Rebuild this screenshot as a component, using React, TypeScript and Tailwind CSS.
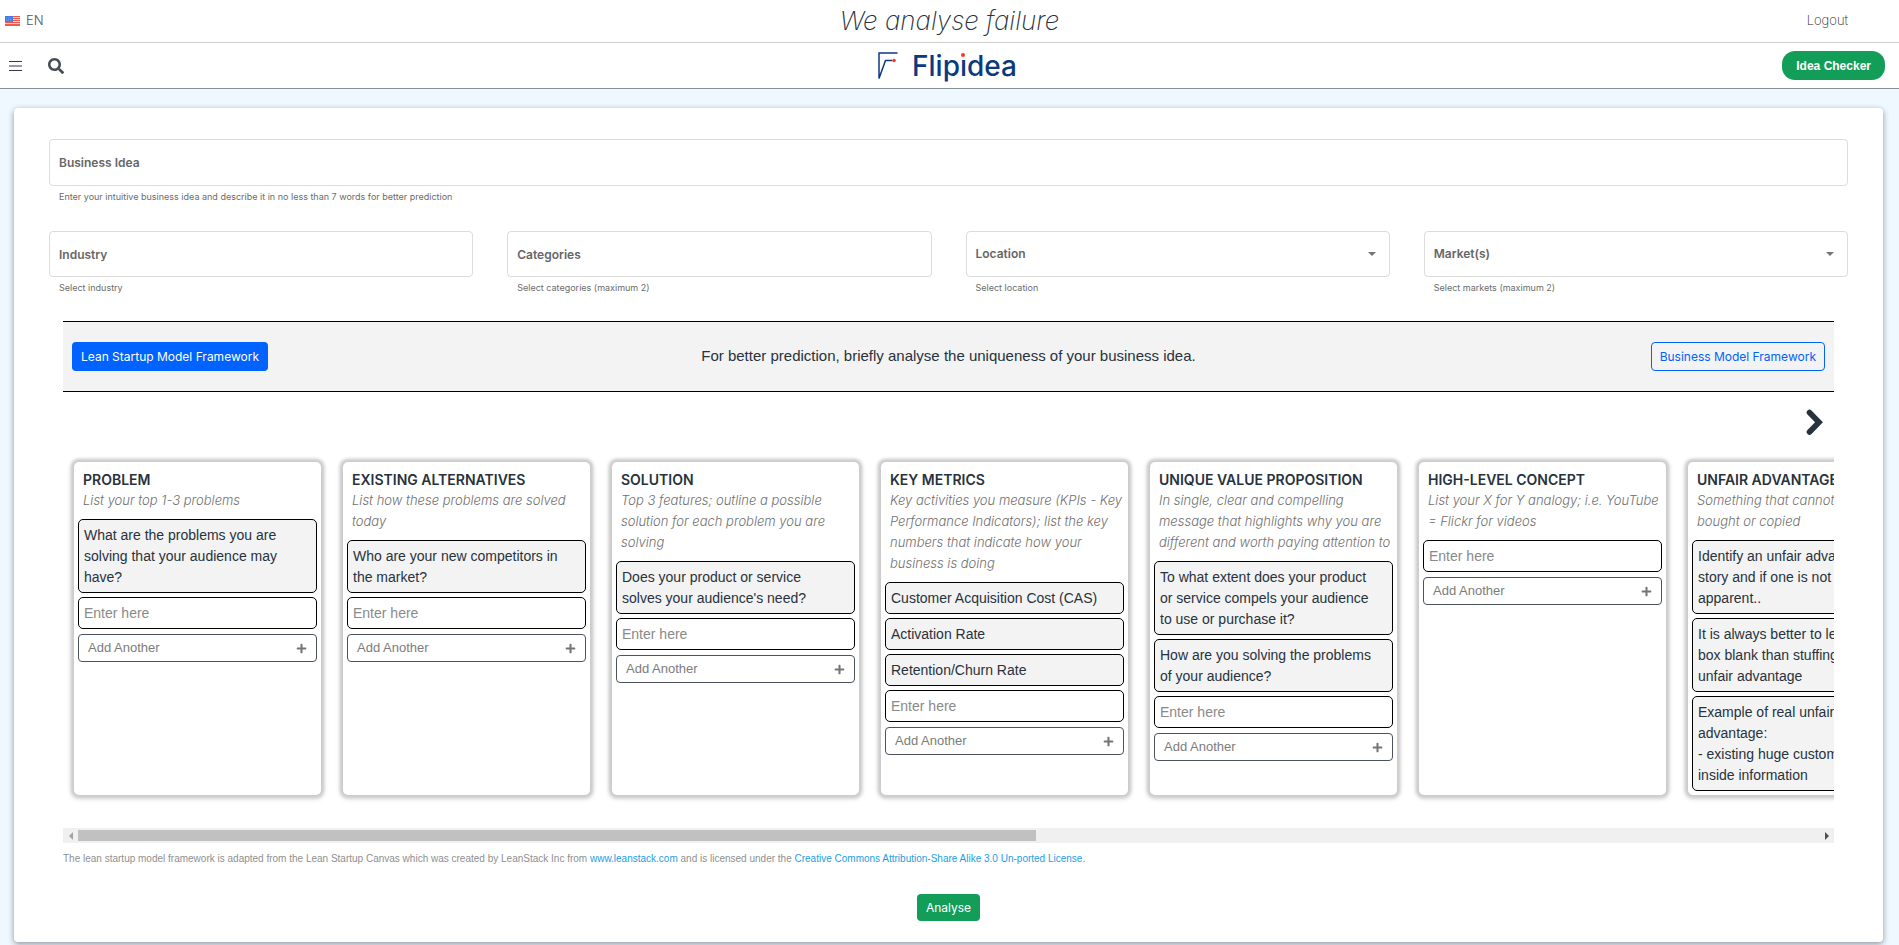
import { useRef } from "react";
import { FaPlus, FaSearch } from "react-icons/fa";

type Card = { title: string; hint: string; notes: string[]; editable: boolean };

const cards: Card[] = [
  {
    title: "PROBLEM",
    hint: "List your top 1-3 problems",
    notes: ["What are the problems you are\nsolving that your audience may\nhave?"],
    editable: true,
  },
  {
    title: "EXISTING ALTERNATIVES",
    hint: "List how these problems are solved\ntoday",
    notes: ["Who are your new competitors in\nthe market?"],
    editable: true,
  },
  {
    title: "SOLUTION",
    hint: "Top 3 features; outline a possible\nsolution for each problem you are\nsolving",
    notes: ["Does your product or service\nsolves your audience's need?"],
    editable: true,
  },
  {
    title: "KEY METRICS",
    hint: "Key activities you measure (KPIs - Key\nPerformance Indicators); list the key\nnumbers that indicate how your\nbusiness is doing",
    notes: ["Customer Acquisition Cost (CAS)", "Activation Rate", "Retention/Churn Rate"],
    editable: true,
  },
  {
    title: "UNIQUE VALUE PROPOSITION",
    hint: "In single, clear and compelling\nmessage that highlights why you are\ndifferent and worth paying attention to",
    notes: [
      "To what extent does your product\nor service compels your audience\nto use or purchase it?",
      "How are you solving the problems\nof your audience?",
    ],
    editable: true,
  },
  {
    title: "HIGH-LEVEL CONCEPT",
    hint: "List your X for Y analogy; i.e. YouTube\n= Flickr for videos",
    notes: [],
    editable: true,
  },
  {
    title: "UNFAIR ADVANTAGE",
    hint: "Something that cannot be easily\nbought or copied",
    notes: [
      "Identify an unfair advantage\nstory and if one is not\napparent..",
      "It is always better to leave this\nbox blank than stuffing a weak\nunfair advantage",
      "Example of real unfair\nadvantage:\n- existing huge customer base,\ninside information",
    ],
    editable: false,
  },
];

function Flag() {
  return (
    <svg width="15" height="10" viewBox="0 0 15 10" aria-hidden="true">
      <rect width="15" height="10" fill="#f7d9d6" />
      {[0, 2, 4, 6, 8].map((y) => (
        <rect key={y} y={y} width="15" height="1.1" fill="#ee5a4f" />
      ))}
      <rect y="9.2" width="15" height="0.8" fill="#c9503f" />
      <rect width="8" height="6" fill="#3f7be0" />
      {[1.5, 3, 4.5].map((y) =>
        [1.5, 3.5, 5.5].map((x) => (
          <rect key={`${x}-${y}`} x={x} y={y} width="0.7" height="0.7" fill="#a9c8fa" />
        )),
      )}
    </svg>
  );
}

function Logo() {
  return (
    <a href="#home" className="flex items-center gap-[14px] pr-1" aria-label="Flipidea">
      <svg width="20" height="28" viewBox="0 0 20 28" fill="none" aria-hidden="true">
        <path d="M19.5 1H1V26.5L7.5 8.5H14" stroke="#0b3a80" strokeWidth="1.5" />
        <circle cx="16" cy="8.5" r="1.8" fill="#f4392c" />
      </svg>
      <span className="text-[28px] leading-8 font-medium text-[#0b3a80]">
        Flip<span className="relative">ı<span className="absolute top-1 left-1/2 size-1 -translate-x-1/2 rounded-full bg-[#f4392c]" /></span>dea
      </span>
    </a>
  );
}

const box =
  "w-full rounded-[4px] border border-[#dcdcdc] bg-white px-[9px] text-[12px] font-semibold text-[#666] placeholder:text-[#666] placeholder:opacity-100";

function TextField({ label, help, tall }: { label: string; help: string; tall?: boolean }) {
  return (
    <div>
      <input aria-label={label} placeholder={label} className={`${box} block ${tall ? "h-[47px]" : "h-[46px]"}`} />
      <p className="px-[10px] pt-[3px] text-[9px] leading-4 text-[#6c6c6c]">{help}</p>
    </div>
  );
}

function SelectField({ label, help }: { label: string; help: string }) {
  return (
    <div>
      <div className="relative">
        <select aria-label={label} className={`${box} block h-[46px] appearance-none`}>
          <option>{label}</option>
        </select>
        <svg width="8" height="4" viewBox="0 0 8 4" className="pointer-events-none absolute top-1/2 right-[14px] -translate-y-1/2" aria-hidden="true">
          <path d="M0 0H8L4 4Z" fill="#757575" />
        </svg>
      </div>
      <p className="px-[10px] pt-[3px] text-[9px] leading-4 text-[#6c6c6c]">{help}</p>
    </div>
  );
}

function CanvasCard({ card }: { card: Card }) {
  return (
    <section className="w-[247px] shrink-0 rounded-[5px] bg-white px-1 pt-[7px] pb-1 font-['Liberation_Sans',sans-serif] shadow-[0_0_3px_3px_#cccccc,0_1px_5px_3px_#e0e0e0]">
      <h2 className="px-[5px] font-['Inter',sans-serif] text-[14px] leading-[21px] font-semibold whitespace-nowrap">{card.title}</h2>
      <p className="px-[5px] pb-2 font-['Inter',sans-serif] text-[13px] leading-[21px] font-light whitespace-pre text-[#707070] italic">{card.hint}</p>
      <div className="flex flex-col gap-1">
        {card.notes.map((note) => (
          <p key={note} className="rounded-[5px] border border-black bg-[#f3f3f3] px-[5px] pt-[5px] pb-1 text-[14px] leading-[21px] whitespace-pre">
            {note}
          </p>
        ))}
        {card.editable && (
          <>
            <input
              aria-label={`${card.title} entry`}
              placeholder="Enter here"
              className="h-8 w-full rounded-[5px] border border-black px-[5px] text-[14px] placeholder:text-[#8a8a8a]"
            />
            <button type="button" className="mt-px flex h-7 items-center justify-between rounded-[4px] border border-[#4b5260] px-[9px] text-[13px] text-[#7c7c7c]">
              Add Another
              <FaPlus size={11} className="text-[#757575]" />
            </button>
          </>
        )}
      </div>
    </section>
  );
}

export default function App() {
  const scroller = useRef<HTMLDivElement>(null);
  const move = (dx: number) => scroller.current?.scrollBy({ left: dx, behavior: "smooth" });

  return (
    <div className="min-h-screen bg-[#eff7ff] pb-[3px] font-['Inter','Liberation_Sans',sans-serif] text-[#27323d]">
      <div className="grid h-[43px] grid-cols-3 items-center border-b border-[#cfcfcf] bg-white">
        <button type="button" className="flex items-center gap-[6px] pl-[5px] text-[13px] font-light text-[#555]">
          <Flag />
          EN
        </button>
        <p className="text-center text-[26px] leading-8 font-extralight italic">We analyse failure</p>
        <a href="#logout" className="justify-self-end pr-[51px] text-[13px] font-extralight text-[#222]">
          Logout
        </a>
      </div>

      <header className="grid h-[46px] grid-cols-3 items-center border-b border-[#868e96] bg-white">
        <div className="flex items-center gap-[26px] pl-[9px]">
          <button type="button" aria-label="Menu">
            <svg width="13" height="10" viewBox="0 0 13 10" aria-hidden="true">
              <path d="M0 .5H13M0 5H13M0 9.5H13" stroke="#333b44" strokeWidth="1" />
            </svg>
          </button>
          <button type="button" aria-label="Search">
            <FaSearch size={16} className="text-[#454d58]" />
          </button>
        </div>
        <div className="flex justify-center">
          <Logo />
        </div>
        <button type="button" className="mr-[14px] h-[29px] justify-self-end rounded-[13px] bg-[#129e58] px-[14px] font-['Liberation_Sans',sans-serif] text-[12px] font-bold text-white">
          Idea Checker
        </button>
      </header>

      <main className="mx-[14px] mt-[19px] mr-4 rounded-[4px] bg-white px-[35px] pt-[31px] pb-[21px] shadow-[0_2px_6px_#00000066]">
        <TextField label="Business Idea" help="Enter your intuitive business idea and describe it in no less than 7 words for better prediction" tall />
        <div className="mt-[26px] grid grid-cols-4 gap-x-[34px]">
          <TextField label="Industry" help="Select industry" />
          <TextField label="Categories" help="Select categories (maximum 2)" />
          <SelectField label="Location" help="Select location" />
          <SelectField label="Market(s)" help="Select markets (maximum 2)" />
        </div>

        <div className="mx-[14px] mt-[25px] font-['Liberation_Sans',sans-serif]">
          <div className="grid h-[71px] grid-cols-[1fr_auto_1fr] items-center border-y border-black bg-[#f3f3f3] px-[9px]">
            <button type="button" className="h-[29px] justify-self-start rounded-[4px] bg-[#0062ff] px-[9px] font-['Inter',sans-serif] text-[12px] text-white">
              Lean Startup Model Framework
            </button>
            <p className="text-[15px]">For better prediction, briefly analyse the uniqueness of your business idea.</p>
            <button type="button" className="h-[29px] justify-self-end rounded-[4px] border border-[#0062ff] px-2 font-['Inter',sans-serif] text-[12px] text-[#0062ff]">
              Business Model Framework
            </button>
          </div>

          <div className="flex justify-end pt-[17px] pr-[11px]">
            <button type="button" aria-label="Next" onClick={() => move(269)}>
              <svg width="17" height="27" viewBox="0 0 17 27" fill="none" aria-hidden="true">
                <path d="M3.5 3.5L13 13.2L3.5 23" stroke="#27323d" strokeWidth="5.6" strokeLinecap="round" />
              </svg>
            </button>
          </div>

          <div ref={scroller} className="mt-[17px] flex gap-[22px] overflow-x-auto px-[11px] pt-[9px] pb-[33px] [scrollbar-width:none]">
            {cards.map((card) => (
              <CanvasCard key={card.title} card={card} />
            ))}
          </div>
          <div className="flex h-[15px] items-center bg-[#f0f0f0]">
            <button type="button" aria-label="Scroll left" onClick={() => move(-269)} className="flex w-[15px] justify-center">
              <svg width="4" height="8" viewBox="0 0 4 8" aria-hidden="true">
                <path d="M4 0V8L0 4Z" fill="#a3a3a3" />
              </svg>
            </button>
            <div className="flex-1">
              <div className="h-[11px] w-[55%] bg-[#c1c1c1]" />
            </div>
            <button type="button" aria-label="Scroll right" onClick={() => move(269)} className="flex w-[15px] justify-center">
              <svg width="4" height="8" viewBox="0 0 4 8" aria-hidden="true">
                <path d="M0 0V8L4 4Z" fill="#505050" />
              </svg>
            </button>
          </div>
          <p className="pt-2 text-[10px] leading-4 text-[#8f8f8f]">
            The lean startup model framework is adapted from the Lean Startup Canvas which was created by LeanStack Inc from{" "}
            <a href="#leanstack" className="text-[#1ca0e3]">www.leanstack.com</a> and is licensed under the{" "}
            <a href="#license" className="text-[#1ca0e3]">Creative Commons Attribution-Share Alike 3.0 Un-ported License.</a>
          </p>
        </div>

        <div className="mt-[27px] flex justify-center">
          <button type="button" className="h-[27px] rounded-[4px] bg-[#129e58] px-[9px] text-[12px] text-white">
            Analyse
          </button>
        </div>
      </main>
    </div>
  );
}
